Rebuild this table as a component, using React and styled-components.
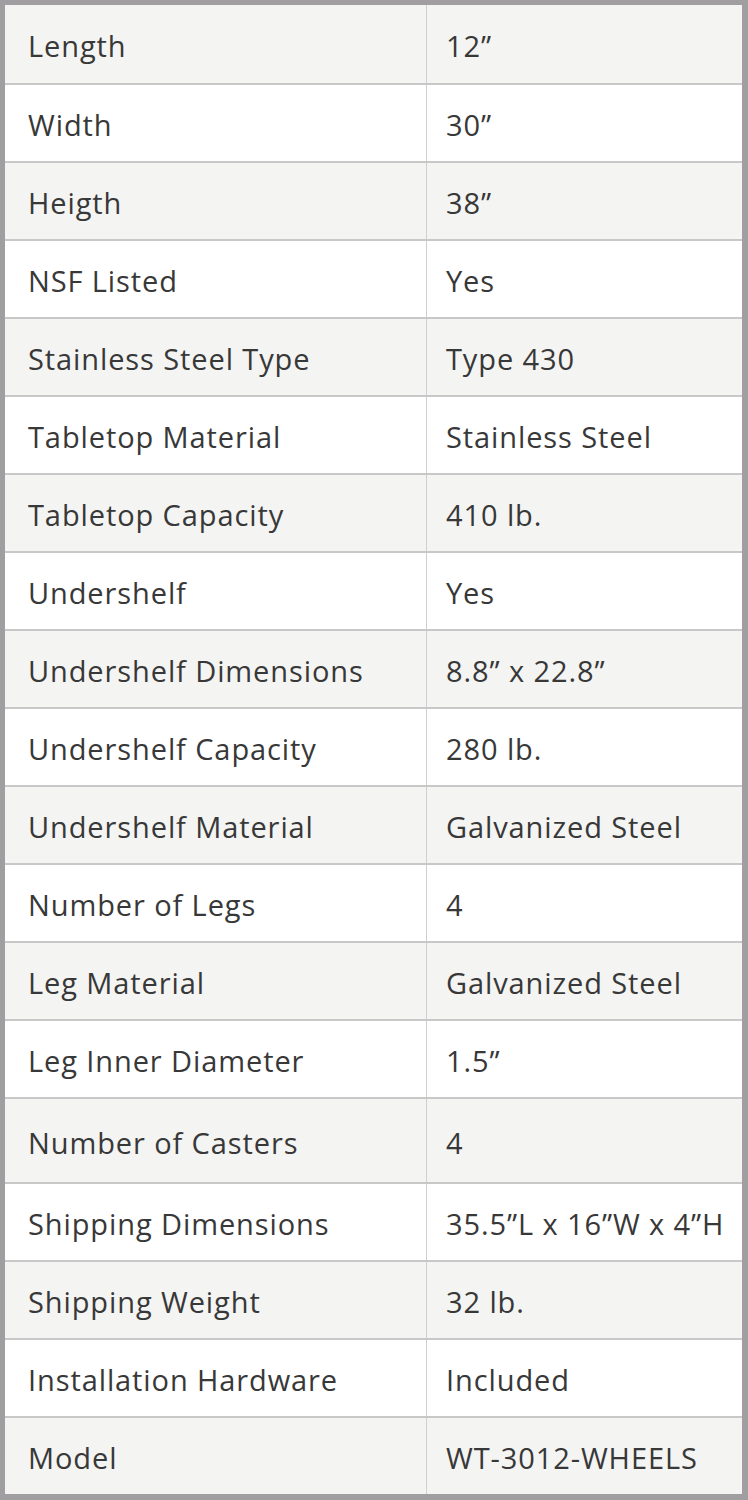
import styled, { createGlobalStyle } from "styled-components";

const GlobalStyle = createGlobalStyle`
  html, body {
    margin: 0;
    padding: 0;
    background: #fff;
  }
`;

const Frame = styled.div`
  width: 748px;
  height: 1500px;
  box-sizing: border-box;
  border-style: solid;
  border-color: #a09ea0;
  border-width: 5px 6px 6px 5px;
  background: #fff;
  display: flex;
  flex-direction: column;
  font-family: "Open Sans", "Liberation Sans", sans-serif;
  color: #383838;
`;

const SpecRow = styled.div`
  display: grid;
  grid-template-columns: 421px 1fr;
  height: ${(p) => (p.tall ? 85 : 78)}px;
  box-sizing: border-box;
  background: ${(p) => (p.shade ? "#f4f4f3" : "#ffffff")};
  border-top: ${(p) => (p.first ? "none" : "2px solid #c8c8c8")};
  flex: ${(p) => (p.last ? "1" : "none")};
`;

const Cell = styled.div`
  display: flex;
  align-items: center;
  padding-left: ${(p) => (p.value ? 19 : 23)}px;
  padding-top: 3px;
  font-size: 29px;
  letter-spacing: 0.9px;
  white-space: nowrap;
  border-left: ${(p) => (p.value ? "1px solid #cfcfcf" : "none")};
`;

const specs = [
  ["Length", "12\u201D"],
  ["Width", "30\u201D"],
  ["Heigth", "38\u201D"],
  ["NSF Listed", "Yes"],
  ["Stainless Steel Type", "Type 430"],
  ["Tabletop Material", "Stainless Steel"],
  ["Tabletop Capacity", "410 lb."],
  ["Undershelf", "Yes"],
  ["Undershelf Dimensions", "8.8\u201D x 22.8\u201D"],
  ["Undershelf Capacity", "280 lb."],
  ["Undershelf Material", "Galvanized Steel"],
  ["Number of Legs", "4"],
  ["Leg Material", "Galvanized Steel"],
  ["Leg Inner Diameter", "1.5\u201D"],
  ["Number of Casters", "4"],
  ["Shipping Dimensions", "35.5\u201DL x 16\u201DW x 4\u201DH"],
  ["Shipping Weight", "32 lb."],
  ["Installation Hardware", "Included"],
  ["Model", "WT-3012-WHEELS"],
];

const App = () => {
  return (
    <>
      <GlobalStyle />
      <Frame>
        {specs.map(([label, value], i) => (
          <SpecRow
            key={label}
            shade={i % 2 === 0}
            first={i === 0}
            last={i === specs.length - 1}
            tall={label === "Number of Casters"}
          >
            <Cell>{label}</Cell>
            <Cell value>{value}</Cell>
          </SpecRow>
        ))}
      </Frame>
    </>
  );
};

export default App;
